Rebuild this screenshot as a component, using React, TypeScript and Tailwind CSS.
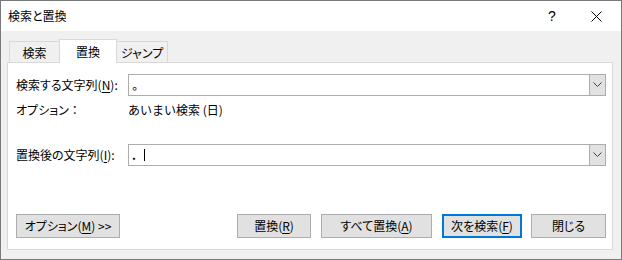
import React from "react";

const Chevron = () => (
  <svg width="9" height="6" viewBox="0 0 9 6" className="block">
    <polyline points="0.5,0.5 4.5,4.5 8.5,0.5" fill="none" stroke="#404040" strokeWidth="1" />
  </svg>
);

const Combo = ({ children }: { children?: React.ReactNode }) => (
  <div className="w-[478px] h-[22px] border border-[#adadad] bg-white flex items-stretch">
    <div className="flex-1 flex items-center pl-[3px] text-[12px] leading-none">{children}</div>
    <div className="w-[17px] bg-[#e1e1e1] border border-[#adadad] -my-px -mr-px flex items-center justify-center">
      <Chevron />
    </div>
  </div>
);

const Btn = ({ w, children, def }: { w: string; children: React.ReactNode; def?: boolean }) => (
  <div
    className={
      "h-[24px] flex items-center justify-center text-[12px] bg-[#e1e1e1] " +
      w +
      (def ? " border-2 border-[#0078d7]" : " border border-[#adadad]")
    }
  >
    {children}
  </div>
);

const U = ({ c }: { c: string }) => <span className="underline underline-offset-[2px]">{c}</span>;

export default function App() {
  return (
    <div className="w-[622px] h-[260px] border border-[#7a7a7a] bg-[#f0f0f0] flex flex-col text-black font-['Noto_Sans_CJK_JP','Noto_Sans',sans-serif] [font-feature-settings:'palt']">
      {/* Title bar */}
      <div className="h-[30px] bg-white flex items-center shrink-0">
        <div className="pl-[7px] text-[12px] leading-none">検索と置換</div>
        <div className="flex-1" />
        <div className="w-[30px] flex justify-center text-[14px] leading-none font-['Liberation_Sans',sans-serif]">?</div>
        <div className="w-[14px]" />
        <div className="w-[30px] flex justify-center">
          <svg width="11" height="11" viewBox="0 0 11 11">
            <line x1="0.5" y1="0.5" x2="10.5" y2="10.5" stroke="#000" strokeWidth="1" />
            <line x1="10.5" y1="0.5" x2="0.5" y2="10.5" stroke="#000" strokeWidth="1" />
          </svg>
        </div>
        <div className="w-[10px]" />
      </div>

      {/* Tabs */}
      <div className="h-[31px] flex items-end pl-[8px] shrink-0">
        <div className="w-[51px] h-[21px] border border-b-0 border-[#d9d9d9] flex items-center justify-center pt-[2px] text-[12px] leading-none">
          検索
        </div>
        <div className="w-[58px] h-[24px] -ml-px -mb-px relative z-10 bg-white border border-b-0 border-[#d9d9d9] flex items-center justify-center pt-[1px] text-[12px] leading-none">
          置換
        </div>
        <div className="w-[52px] h-[21px] -ml-px border border-b-0 border-[#d9d9d9] flex items-center justify-center pt-[2px] text-[12px] leading-none">
          ジャンプ
        </div>
      </div>

      {/* Panel */}
      <div className="ml-[6px] mr-[8px] h-[188px] bg-white border border-[#d9d9d9] flex flex-col shrink-0">
        <div className="mt-[11px] flex items-center pl-[8px]">
          <div className="w-[112px] text-[12px] leading-none">
            検索する文字列(<U c="N" />):
          </div>
          <Combo>
            <span className="text-[12px]">。</span>
          </Combo>
        </div>
        <div className="mt-[4px] h-[20px] flex items-center pl-[8px] text-[12px] leading-none">
          <div className="w-[112px]">
            オプション<span className="[font-feature-settings:normal]">：</span>
          </div>
          <div className="[font-feature-settings:normal]">あいまい検索 (日)</div>
        </div>
        <div className="mt-[24px] flex items-center pl-[8px]">
          <div className="w-[112px] text-[12px] leading-none">
            置換後の文字列(<U c="I" />):
          </div>
          <Combo>
            <span className="text-[12px] font-bold">.</span>
            <span className="ml-[8px] w-px h-[12px] bg-black" />
          </Combo>
        </div>
        <div className="mt-[48px] flex items-center pl-[8px] pr-[6px]">
          <Btn w="w-[104px]">
            オプション(<U c="M" />) &gt;&gt;
          </Btn>
          <div className="flex-1" />
          <Btn w="w-[74px]">
            置換(<U c="R" />)
          </Btn>
          <div className="w-[10px]" />
          <Btn w="w-[111px]">
            すべて置換(<U c="A" />)
          </Btn>
          <div className="w-[10px]" />
          <Btn w="w-[80px]" def>
            次を検索(<U c="F" />)
          </Btn>
          <div className="w-[9px]" />
          <Btn w="w-[75px]">閉じる</Btn>
        </div>
      </div>
    </div>
  );
}
